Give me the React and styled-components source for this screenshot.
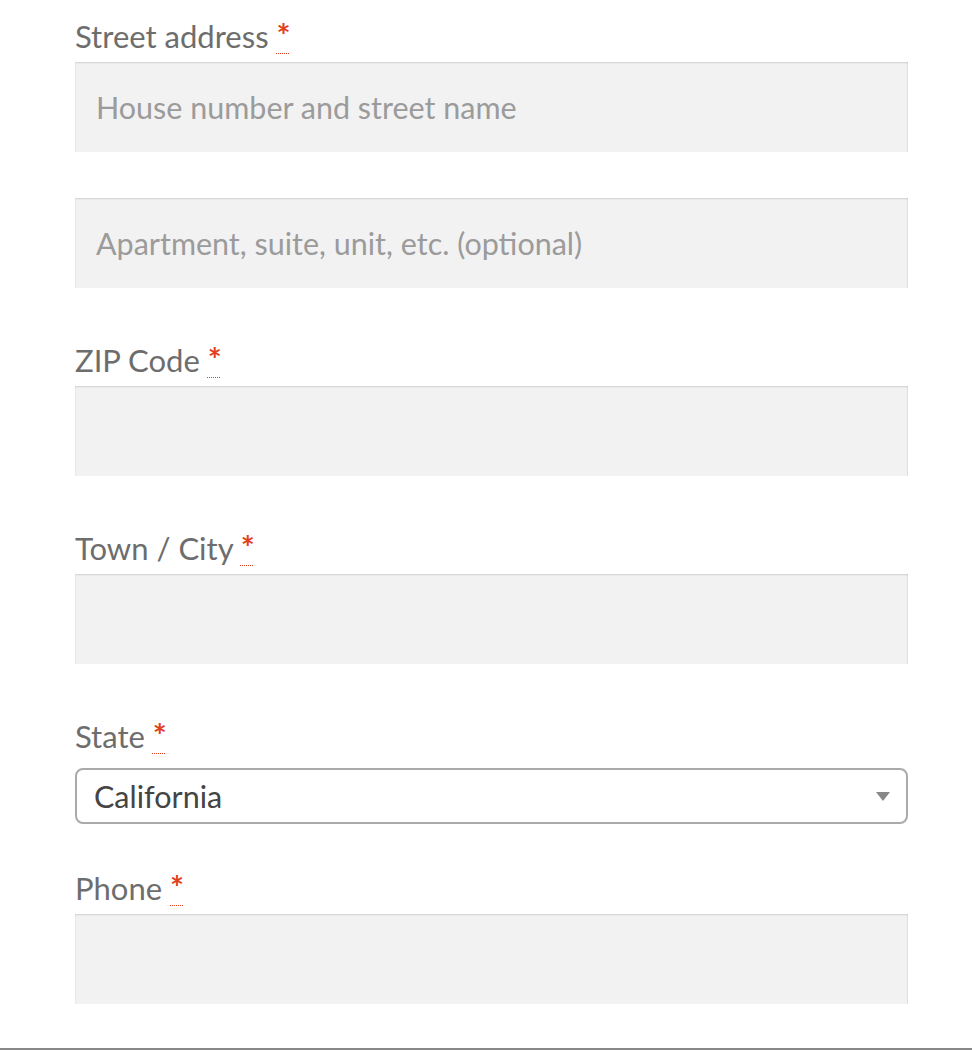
import React from "react";
import styled, { createGlobalStyle } from "styled-components";

const GlobalStyle = createGlobalStyle`
  html, body {
    margin: 0;
    padding: 0;
    background: #ffffff;
  }
  body {
    font-family: Lato, "Open Sans", "Liberation Sans", sans-serif;
    -webkit-font-smoothing: antialiased;
  }
`;

const Page = styled.div`
  width: 972px;
  min-height: 1050px;
  display: flex;
  flex-direction: column;
  box-sizing: border-box;
`;

const Form = styled.form`
  display: flex;
  flex-direction: column;
  width: 833px;
  padding: 10px 0 0 75px;
  height: 1038px;
  box-sizing: content-box;
`;

const Field = styled.p`
  margin: 0 0 ${(p) => p.$gap ?? 46}px 0;
  padding: 0;
  display: flex;
  flex-direction: column;
`;

const Label = styled.label`
  display: block;
  font-size: 31px;
  line-height: 50px;
  height: 50px;
  margin-bottom: 2px;
  color: #6d6d6d;
  font-weight: 400;
  white-space: nowrap;
`;

const Required = styled.abbr`
  color: #e2401c;
  font-weight: 700;
  font-size: 33px;
  text-decoration: underline dotted #e2401c;
  text-decoration-thickness: 1px;
  text-underline-offset: 5px;
  cursor: help;
`;

const Input = styled.input`
  display: block;
  width: 100%;
  height: 90px;
  box-sizing: border-box;
  border: 0;
  outline: none;
  margin: 0;
  padding: 0 21px;
  background: #f2f2f2;
  box-shadow: inset 0 1px 2px rgba(0, 0, 0, 0.14), inset -1px 0 0 #e8e8e8;
  font-family: Lato, "Open Sans", "Liberation Sans", sans-serif;
  font-size: 30.5px;
  color: #43454b;
  &::placeholder {
    color: #9b9b9b;
    opacity: 1;
  }
`;

const Select = styled.div`
  margin-top: 6px;
  height: 56px;
  box-sizing: border-box;
  border: 2px solid #aaaaaa;
  border-radius: 8px;
  background: #ffffff;
  display: flex;
  align-items: center;
  justify-content: space-between;
  padding: 0 16px 0 17px;
`;

const SelectValue = styled.span`
  font-size: 30.5px;
  color: #444444;
  line-height: 1;
`;

const Arrow = styled.svg`
  width: 14px;
  height: 9px;
  flex: none;
`;

const Footer = styled.div`
  border-top: 2px solid #888888;
  height: 0;
`;

function Req() {
  return <Required title="required">*</Required>;
}

export default function App() {
  return (
    <Page>
      <GlobalStyle />
      <Form onSubmit={(e) => e.preventDefault()}>
        <Field>
          <Label htmlFor="street">
            Street address <Req />
          </Label>
          <Input id="street" placeholder="House number and street name" />
        </Field>
        <Field>
          <Input placeholder="Apartment, suite, unit, etc. (optional)" />
        </Field>
        <Field>
          <Label htmlFor="zip">
            ZIP Code <Req />
          </Label>
          <Input id="zip" />
        </Field>
        <Field>
          <Label htmlFor="city">
            Town / City <Req />
          </Label>
          <Input id="city" />
        </Field>
        <Field $gap={38}>
          <Label>
            State <Req />
          </Label>
          <Select role="combobox">
            <SelectValue>California</SelectValue>
            <Arrow viewBox="0 0 14 9">
              <path d="M0 0 L14 0 L7 9 Z" fill="#888888" />
            </Arrow>
          </Select>
        </Field>
        <Field $gap={0}>
          <Label htmlFor="phone">
            Phone <Req />
          </Label>
          <Input id="phone" />
        </Field>
      </Form>
      <Footer />
    </Page>
  );
}
